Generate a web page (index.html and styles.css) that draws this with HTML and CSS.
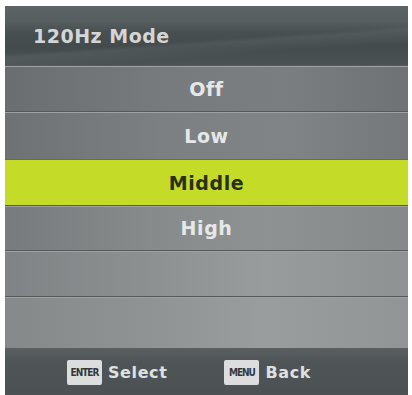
FILE: index.html
```html
<!DOCTYPE html>
<html>
<head>
<meta charset="utf-8">
<link rel="stylesheet" href="styles.css">
</head>
<body>
<div class="osd">
  <div class="title"><span class="title-text">120Hz Mode</span></div>
  <div class="row r1">Off</div>
  <div class="row r2">Low</div>
  <div class="row sel">Middle</div>
  <div class="row r4">High</div>
  <div class="row r5"></div>
  <div class="row r6"></div>
  <div class="footer">
    <div class="hint"><span class="key">ENTER</span><span class="label">Select</span></div>
    <div class="hint"><span class="key">MENU</span><span class="label">Back</span></div>
  </div>
</div>
</body>
</html>
```
FILE: styles.css
```css
html, body {
  margin: 0;
  padding: 0;
  background: #ffffff;
  width: 412px;
  height: 395px;
  overflow: hidden;
}
.osd {
  margin: 6px 0 0 5px;
  width: 403px;
  height: 389px;
  display: grid;
  grid-template-rows: 59px 46px 48px 46px 45px 46px 1fr 47px;
  font-family: "DejaVu Sans", Verdana, sans-serif;
  font-weight: bold;
  background: #8a8d8e;
}
.title {
  background:
    linear-gradient(176deg, rgba(255,255,255,0) 0%, rgba(255,255,255,0) 55%, rgba(255,255,255,0.06) 60%, rgba(255,255,255,0) 75%),
    linear-gradient(180deg, #5c6466 0%, #565e60 25%, #474f51 45%, #434b4d 70%, #4b5355 100%);
  display: flex;
  align-items: center;
  padding-left: 28px;
}
.title-text {
  color: #d4d6d6;
  font-size: 19px;
  letter-spacing: 0.5px;
  margin-top: 1px;
}
.row {
  display: flex;
  align-items: center;
  justify-content: center;
  color: #e6e8e8;
  font-size: 19px;
  letter-spacing: 0.6px;
  border-top: 1px solid #54595b;
  box-shadow: inset 0 1px 0 #9ea2a3;
}
.r1 { background: linear-gradient(90deg, #6a6e70 0%, #777b7d 40%, #7a7e80 70%, #6e7274 100%); }
.r2 { background: linear-gradient(90deg, #6e7274 0%, #7c8082 40%, #808486 70%, #74787a 100%); }
.r4 { background: linear-gradient(90deg, #777b7d 0%, #868a8b 35%, #8f9293 65%, #85898a 100%); }
.r5 { background: linear-gradient(90deg, #808385 0%, #8d9091 35%, #999c9c 65%, #8f9293 100%); }
.r6 { background: linear-gradient(90deg, #85898a 0%, #909394 35%, #9a9d9d 65%, #929596 100%); }
.sel {
  background: #c4dc28;
  color: #2a3018;
  border-top: 1px solid #6c7236;
  box-shadow: none;
}
.footer {
  background: linear-gradient(180deg, #5a6062 0%, #4f5557 30%, #4c5254 100%);
  display: flex;
  align-items: center;
  padding-left: 62px;
  gap: 57px;
  padding-top: 1px;
}
.hint {
  display: flex;
  align-items: center;
  gap: 6px;
}
.key {
  display: inline-flex;
  align-items: center;
  justify-content: center;
  width: 35px;
  height: 25px;
  background: #dcdedd;
  border-radius: 2px;
  color: #33373a;
  font-family: "DejaVu Sans Condensed", "Liberation Sans Narrow", sans-serif;
  font-size: 10px;
  font-weight: bold;
  letter-spacing: -1px;
}
.label {
  color: #dfe1e1;
  font-size: 16px;
  letter-spacing: 0.6px;
}
```
